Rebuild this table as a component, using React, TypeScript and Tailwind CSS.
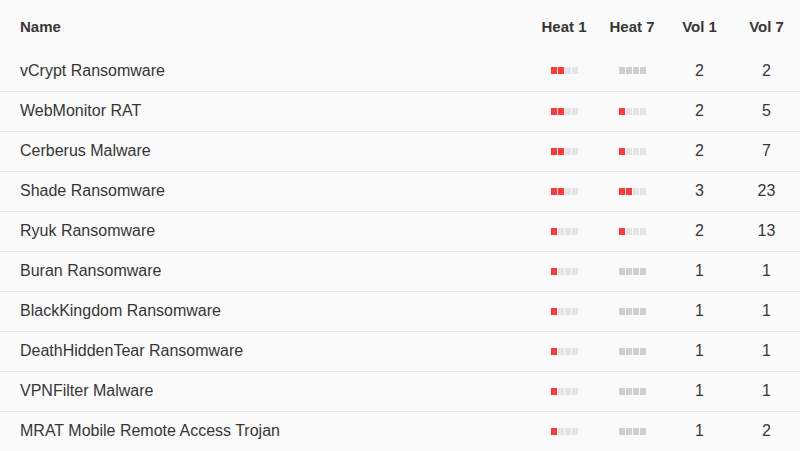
import React from "react";

const rows: [string, number, number, number, number][] = [
  ["vCrypt Ransomware", 2, 0, 2, 2],
  ["WebMonitor RAT", 2, 1, 2, 5],
  ["Cerberus Malware", 2, 1, 2, 7],
  ["Shade Ransomware", 2, 2, 3, 23],
  ["Ryuk Ransomware", 1, 1, 2, 13],
  ["Buran Ransomware", 1, 0, 1, 1],
  ["BlackKingdom Ransomware", 1, 0, 1, 1],
  ["DeathHiddenTear Ransomware", 1, 0, 1, 1],
  ["VPNFilter Malware", 1, 0, 1, 1],
  ["MRAT Mobile Remote Access Trojan", 1, 0, 1, 2],
];

function Heat({ n }: { n: number }) {
  const empty = n === 0;
  return (
    <div className="flex justify-center gap-px">
      {[0, 1, 2, 3].map((i) => (
        <span
          key={i}
          className={
            "block w-[6px] h-[7px] " +
            (i < n ? "bg-[#ff3838]" : empty ? "bg-[#cfcfcf]" : "bg-[#e4e4e4]")
          }
        />
      ))}
    </div>
  );
}

export default function App() {
  return (
    <div
      className="w-[800px] h-[451px] overflow-hidden bg-[#fafafa] text-[#363636]"
      style={{ fontFamily: '"Liberation Sans", Arial, sans-serif' }}
    >
      <table className="w-full border-collapse">
        <colgroup>
          <col />
          <col className="w-[68px]" />
          <col className="w-[68px]" />
          <col className="w-[67px]" />
          <col className="w-[67px]" />
        </colgroup>
        <thead>
          <tr className="h-[51px] text-[15px] font-bold">
            <th className="pl-5 text-left align-middle pt-[3px]">Name</th>
            <th className="text-center pt-[3px]">Heat 1</th>
            <th className="text-center pt-[3px]">Heat 7</th>
            <th className="text-center pt-[3px]">Vol 1</th>
            <th className="text-center pt-[3px]">Vol 7</th>
          </tr>
        </thead>
        <tbody>
          {rows.map(([name, h1, h7, v1, v7], i) => (
            <tr
              key={name}
              className={"h-[40px] text-[16px] " + (i > 0 ? "border-t border-[#e6e6e6]" : "")}
            >
              <td className="pl-5">{name}</td>
              <td>
                <Heat n={h1} />
              </td>
              <td>
                <Heat n={h7} />
              </td>
              <td className="text-center">{v1}</td>
              <td className="text-center">{v7}</td>
            </tr>
          ))}
        </tbody>
      </table>
    </div>
  );
}
